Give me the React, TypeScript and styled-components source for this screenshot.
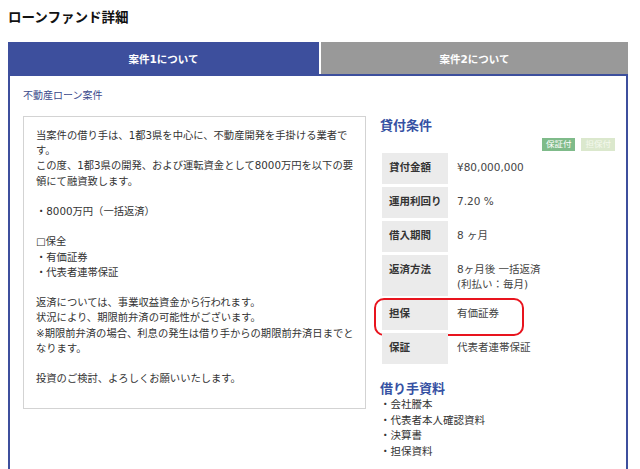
import React from 'react';
import styled, {createGlobalStyle} from 'styled-components';

type TermType = {
  label: string
  value: string[]
  highlight?: boolean
}

const terms: Array<TermType> = [
  {label: '貸付金額', value: ['¥80,000,000']},
  {label: '運用利回り', value: ['7.20 %']},
  {label: '借入期間', value: ['8 ヶ月']},
  {label: '返済方法', value: ['8ヶ月後 一括返済', '(利払い：毎月)']},
  {label: '担保', value: ['有価証券'], highlight: true},
  {label: '保証', value: ['代表者連帯保証']},
];

// each inner array is one paragraph, each string one visual line
const description: string[][] = [
  [
    '当案件の借り手は、1都3県を中心に、不動産開発を手掛ける業者で',
    'す。',
    'この度、1都3県の開発、および運転資金として8000万円を以下の要',
    '領にて融資致します。',
  ],
  ['・8000万円（一括返済）'],
  ['□保全', '・有価証券', '・代表者連帯保証'],
  [
    '返済については、事業収益資金から行われます。',
    '状況により、期限前弁済の可能性がございます。',
    '※期限前弁済の場合、利息の発生は借り手からの期限前弁済日までと',
    'なります。',
  ],
  ['投資のご検討、よろしくお願いいたします。'],
];

const documents = ['会社謄本', '代表者本人確認資料', '決算書', '担保資料'];

const App = () => {
  return (
    <>
      <GlobalStyle/>
      <PageTitle>ローンファンド詳細</PageTitle>
      <Tabs>
        <Tab $active>案件1について</Tab>
        <Tab>案件2について</Tab>
      </Tabs>
      <Panel>
        <Subtitle>不動産ローン案件</Subtitle>
        <Columns>
          <TextBox>
            {description.map((para, i) => (
              <Para key={i}>
                {para.map((line, j) => <Line key={j}>{line}</Line>)}
              </Para>
            ))}
          </TextBox>
          <Side>
            <Heading>貸付条件</Heading>
            <Badges>
              <Badge>保証付</Badge>
              <Badge $muted>担保付</Badge>
            </Badges>
            <Terms>
              {terms.map((t) => (
                <React.Fragment key={t.label}>
                  <Term>
                    {t.label}
                    {t.highlight && <Ring/>}
                  </Term>
                  <Detail>
                    {t.value.map((v) => <Line key={v}>{v}</Line>)}
                  </Detail>
                </React.Fragment>
              ))}
            </Terms>
            <Heading $spaced>借り手資料</Heading>
            <DocList>
              {documents.map((d) => <li key={d}>・{d}</li>)}
            </DocList>
          </Side>
        </Columns>
      </Panel>
    </>
  );
};

export default App;

const GlobalStyle = createGlobalStyle`
    body {
        margin: 8px;
        background: #fff;
        color: #333;
        font-family: "DejaVu Sans", "Noto Sans CJK JP", sans-serif;
    }
`

const PageTitle = styled.h1`
    margin: 0;
    font-size: 13.5px;
    line-height: 16px;
    font-weight: bold;
    color: #111;
    font-family: "Noto Sans CJK JP", sans-serif;
`

const Tabs = styled.div`
    display: grid;
    grid-template-columns: 311px 1fr;
    column-gap: 2px;
    width: 620px;
    margin-top: 18px;
`

const Tab = styled.div<{ $active?: boolean }>`
    height: 32px;
    display: flex;
    align-items: center;
    justify-content: center;
    background: ${p => p.$active ? '#3d4f9d' : '#999'};
    color: #fff;
    font-size: 10.5px;
    font-weight: bold;
`

const Panel = styled.section`
    width: 620px;
    box-sizing: border-box;
    border: 2px solid #3d4f9d;
    padding: 12px 11px 24px 13px;
`

const Subtitle = styled.p`
    margin: 0 0 12px;
    font-size: 10px;
    line-height: 16px;
    color: #3b4a8c;
`

const Columns = styled.div`
    display: grid;
    grid-template-columns: 343px 1fr;
    column-gap: 14px;
    align-items: start;
`

const TextBox = styled.div`
    border: 1px solid #d3d3d3;
    padding: 11px 12px 22px;
    font-size: 10.3px;
    line-height: 15.2px;
    color: #333;
`

const Para = styled.p`
    margin: 0 0 15.2px;

    &:last-child {
        margin-bottom: 0;
    }
`

const Line = styled.span`
    display: block;
    white-space: nowrap;
`

const Side = styled.div`
    display: flex;
    flex-direction: column;
`

const Heading = styled.h2<{ $spaced?: boolean }>`
    margin: ${p => p.$spaced ? '15px' : '0'} 0 0;
    font-size: 13px;
    line-height: 18px;
    font-weight: bold;
    color: #3551a3;
    font-family: "Noto Sans CJK JP", sans-serif;
`

const Badges = styled.div`
    display: flex;
    justify-content: flex-end;
    gap: 6px;
    margin: 4px 0 2px;
`

const Badge = styled.span<{ $muted?: boolean }>`
    height: 13px;
    line-height: 13px;
    padding: 0 4px;
    font-size: 8.5px;
    background: ${p => p.$muted ? '#dbe8cd' : '#7fbb8a'};
    color: ${p => p.$muted ? '#f4f8ee' : '#fff'};
`

const Terms = styled.dl`
    display: grid;
    grid-template-columns: 66px 1fr;
    gap: 3px;
    margin: 0 0 0 2px;
`

const Term = styled.dt`
    position: relative;
    box-sizing: border-box;
    min-height: 31px;
    padding: 7px 7px 4px;
    background: #ebebeb;
    font-size: 10.5px;
    line-height: 15px;
    font-weight: bold;
    color: #333;
    white-space: nowrap;
`

const Detail = styled.dd`
    margin: 0;
    padding: 7px 6px 4px;
    font-size: 10.5px;
    line-height: 15px;
    color: #444;
`

const Ring = styled.span`
    position: absolute;
    left: -8px;
    top: -1px;
    width: 150px;
    height: 38px;
    box-sizing: border-box;
    border: 2px solid #e8141e;
    border-radius: 10px;
    pointer-events: none;
`

const DocList = styled.ul`
    margin: 0;
    padding: 0;
    list-style: none;
    font-size: 10.5px;
    line-height: 15.5px;
    color: #333;
`
